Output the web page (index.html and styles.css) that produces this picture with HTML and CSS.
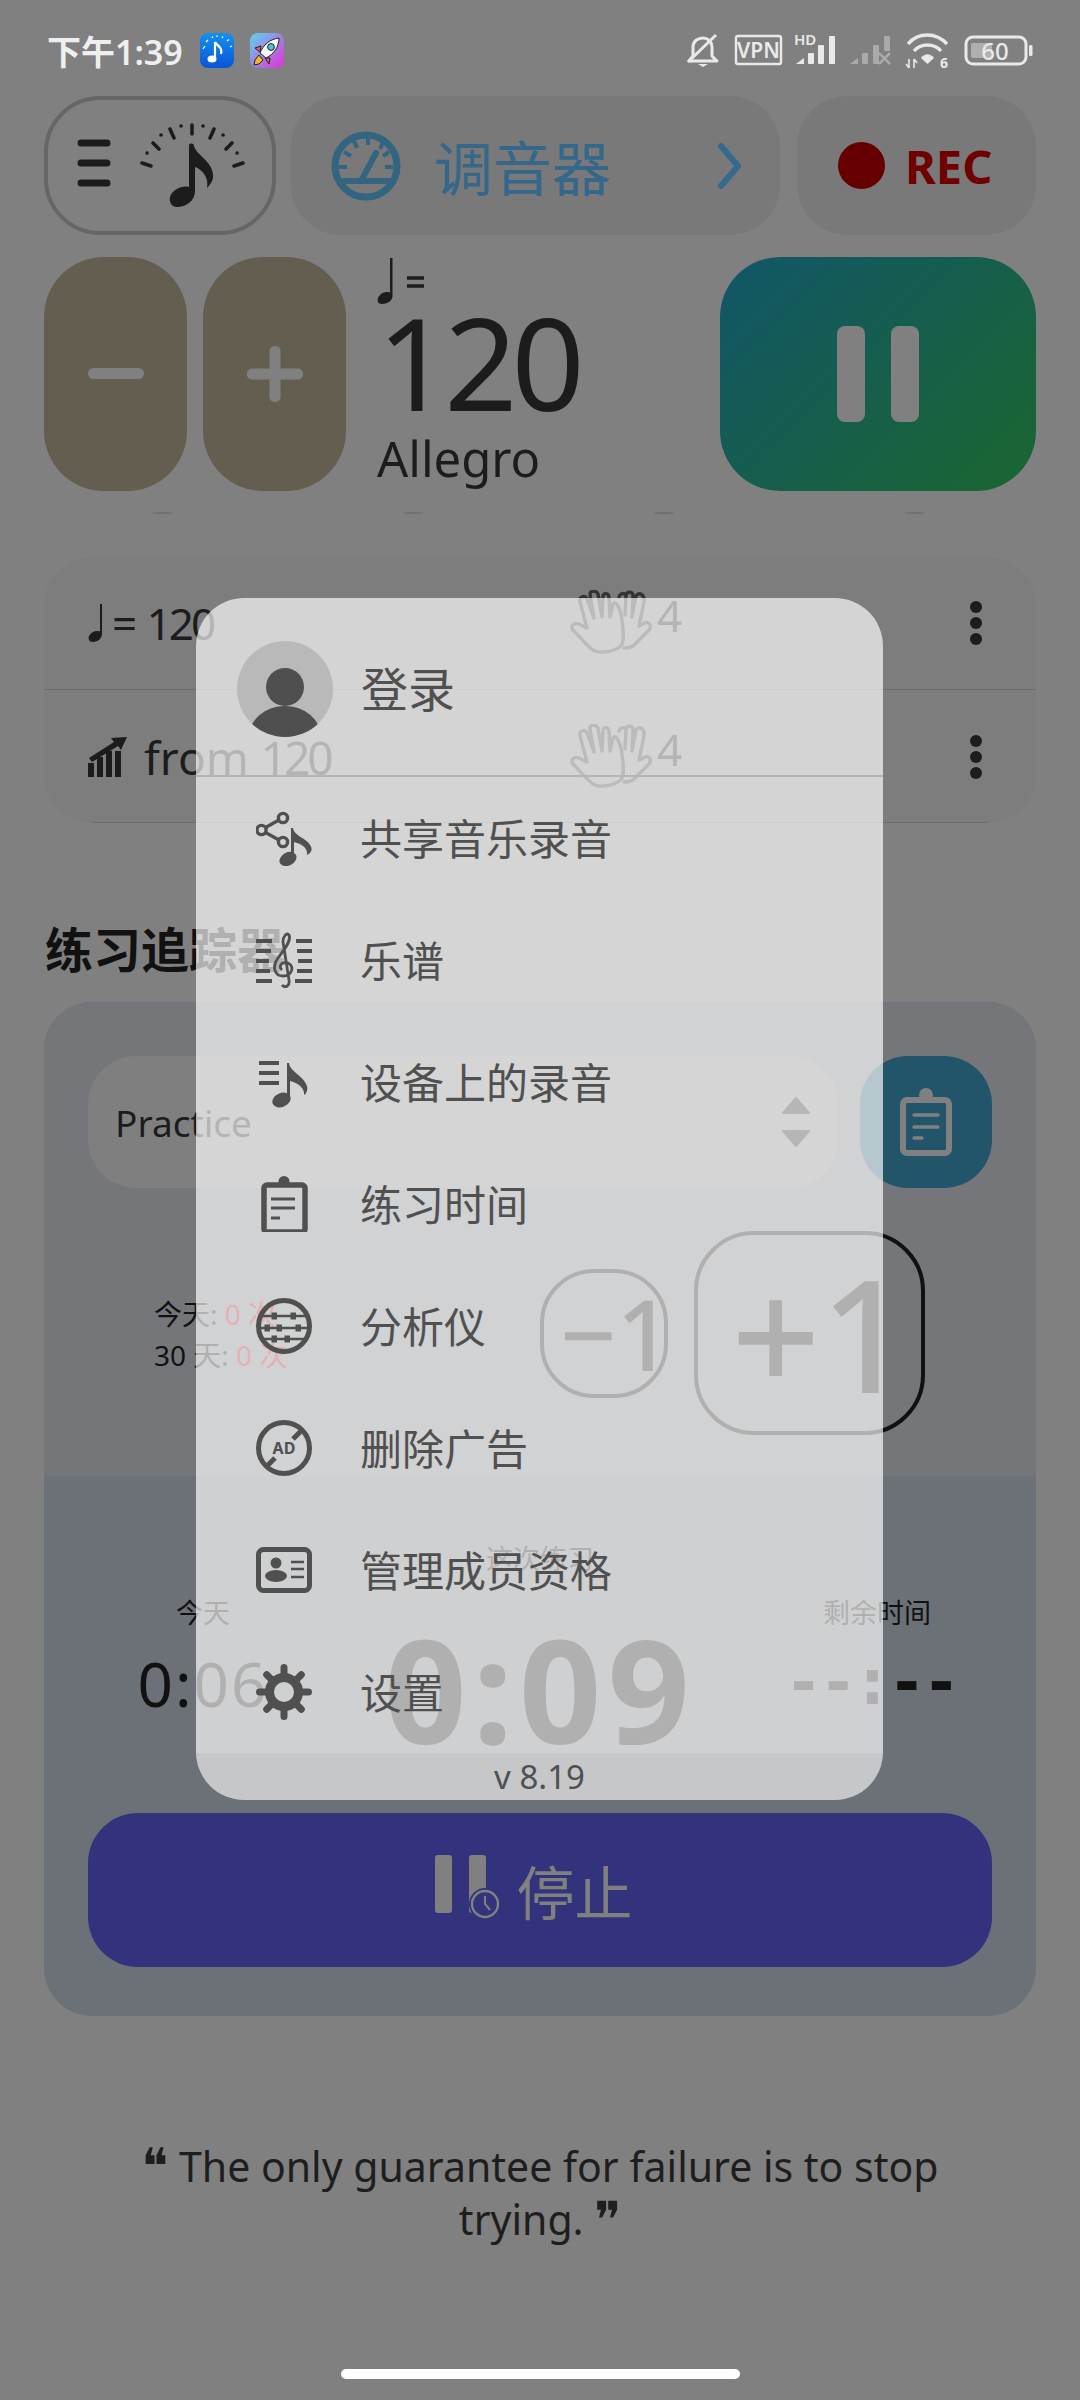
FILE: index.html
```html
<!DOCTYPE html>
<html lang="zh">
<head>
    <meta charset="UTF-8">
    <meta name="viewport" content="width=device-width, initial-scale=1.0">
    <title>Metronome</title>
    <link rel="stylesheet" href="styles.css">
</head>
<body>
    <svg class="defs">
        <defs>
            <linearGradient id="appBlue" x1="0" y1="0" x2="0" y2="1"><stop offset="0" stop-color="#1590ee"/><stop offset="1" stop-color="#0a55d8"/></linearGradient>
            <linearGradient id="appRocket" x1="0" y1="0" x2="1" y2="1"><stop offset="0" stop-color="#58d8ee"/><stop offset="1" stop-color="#e22fd8"/></linearGradient>
            <clipPath id="avatarClip"><circle cx="48" cy="48" r="48"/></clipPath>
            <g id="hands" fill="none" stroke="currentColor" stroke-width="3.4" stroke-linecap="round" stroke-linejoin="round">
                <path d="M53 58 C58 58 62 57 64 54 L78 40 C81 36 78 31 74 33 L68 36 L73 12 C74 5 68 1 65 6 L61 27 L62 6 C62 1 56 1 55 5 L54 25 M55 5 C52 2 49 4 48 7"/>
                <path d="M51 30 C52 40 54 50 50 56 C42 62 28 64 22 60 C16 56 8 46 2 40 C-1 36 3 32 8 34 L16 38 L9 12 C8 6 14 5 16 9 L23 28 L19 5 C19 0 25 0 27 4 L31 27 L32 6 C33 2 38 3 38 8 L39 27 L42 14 C44 10 49 16 51 30"/>
            </g>
            <g id="kebab" fill="#1c1c1c">
                <ellipse cx="7" cy="7" rx="6" ry="6"/><ellipse cx="7" cy="23" rx="6" ry="6"/><ellipse cx="7" cy="39" rx="6" ry="6"/>
            </g>
        </defs>
    </svg>

    <header class="status-bar">
        <span class="clock">下午1:39</span>
        <svg class="app-icon" viewBox="0 0 34 35">
            <rect width="34" height="35" rx="8" fill="url(#appBlue)"/>
            <path d="M15 9 V24 M15 9 C17 13 23 14 21 21" fill="none" stroke="#fff" stroke-width="2.2"/>
            <ellipse cx="12" cy="26" rx="4.5" ry="3.6" fill="#fff"/>
            <path d="M3 16 L5 13 M6 9 L8 7 M12 5 L13 3.5 M17 4 V2.5 M22 5 L23 3.5 M27 8 L29 6.5 M30 14 L32 13" stroke="#fff" stroke-width="1.3"/>
        </svg>
        <svg class="app-icon app-icon-second" viewBox="0 0 34 35">
            <rect width="34" height="35" rx="8" fill="url(#appRocket)"/>
            <path d="M9 22 L5 27 L4 32 L9 31 L13 27 Z" fill="#f5b52a" stroke="#222" stroke-width="1"/>
            <path d="M11 13 L5 15 L10 19 Z M20 25 L19 31 L15 25 Z" fill="#ee5660" stroke="#222" stroke-width="1"/>
            <path d="M10 20 C13 12 20 6 29 5 C29 14 24 21 16 25 Z" fill="#f6f6f6" stroke="#222" stroke-width="1"/>
            <circle cx="21" cy="14" r="3.4" fill="#4cc3d8" stroke="#222" stroke-width="1"/>
        </svg>
        <svg class="status-icons" viewBox="680 30 356 42" width="356" height="42" fill="#e9e9e9">
            <path d="M693 57 V48 C693 42 698 39 703 39 C708 39 712 43 712 48 V57 L717 62 H689 Z" fill="none" stroke="#e9e9e9" stroke-width="3" stroke-linejoin="round"/>
            <path d="M688 63 L716 36" stroke="#e9e9e9" stroke-width="3"/>
            <path d="M698 65 H708 L703 68 Z"/>
            <rect x="736" y="37" width="45" height="28" rx="2" fill="none" stroke="#e9e9e9" stroke-width="2.4"/>
            <text x="758.5" y="59" text-anchor="middle" class="st-text st-vpn">VPN</text>
            <text x="794" y="46" class="st-text st-hd">HD</text>
            <path d="M796 65 L804 59 V65 Z"/><rect x="808" y="54" width="6" height="11" rx="1"/><rect x="818" y="46" width="6" height="19" rx="1"/><rect x="829" y="37" width="6" height="28" rx="1"/>
            <g opacity=".4">
                <path d="M850 65 L858 59 V65 Z"/><rect x="862" y="54" width="6" height="11" rx="1"/><rect x="873" y="46" width="6" height="19" rx="1"/><rect x="884" y="37" width="6" height="15" rx="1"/>
                <path d="M879 54 L890 65 M890 54 L879 65" stroke="#e9e9e9" stroke-width="2.5"/>
            </g>
            <path d="M908 45 C918 33 936 33 947 45 M914 52 C921 44 934 44 941 52" fill="none" stroke="#e9e9e9" stroke-width="3.4"/>
            <path d="M921 59 C925 54 930 54 934 59 L927.5 65 Z"/>
            <path d="M909 60 V69 M906 65 L909 69 M914 69 V60 M917 64 L914 60" fill="none" stroke="#e9e9e9" stroke-width="1.6"/>
            <text x="940" y="69" class="st-text st-six">6</text>
            <rect x="966" y="38" width="60" height="27" rx="7" fill="none" stroke="#e9e9e9" stroke-width="3"/>
            <rect x="971" y="44" width="21" height="15" rx="2" opacity=".45"/>
            <text x="995" y="61" text-anchor="middle" class="st-text st-batt">60</text>
            <rect x="1029" y="46" width="3.5" height="11" rx="1.5"/>
        </svg>
    </header>

    <section class="top-row">
        <button class="menu-button">
            <svg viewBox="44 96 232 139" width="232" height="139">
                <path d="M81 143 H107 M81 163 H107 M81 183 H107" stroke="#1c1c1c" stroke-width="7" stroke-linecap="round"/>
                <g stroke="#1c1c1c" stroke-width="3.6" stroke-linecap="round">
                    <path d="M142 163 L151 166 M153 143 L159 149 M170 129 L174 138 M192 125 V134 M214 129 L210 138 M232 143 L226 149 M243 163 L234 166"/>
                    <path d="M147 153 h.1 M161 135 h.1 M181 126 h.1 M203 126 h.1 M223 135 h.1 M237 153 h.1"/>
                </g>
                <path d="M189 145 C190 143 194 143 194 146 C197 156 211 160 213 174 C214 180 210 185 207 188 C209 178 203 170 195 167 V191 C195 201 186 207 177 207 C171 207 169 201 170 197 C172 190 182 185 189 187 Z" fill="#1c1c1c"/>
            </svg>
        </button>
        <button class="tuner-button">
            <svg class="gauge" viewBox="0 0 70 70" width="70" height="70" fill="none" stroke="#336580">
                <circle cx="35" cy="35" r="31" stroke-width="7"/>
                <path d="M6 50 H64" stroke-width="6"/>
                <path d="M30 50 L45 22" stroke-width="6" stroke-linecap="round"/>
                <path d="M8 36 H16 M13 21 L20 25 M23 10 L26 17 M37 6 V14 M52 11 L49 18 M62 36 H54 M58 21 L52 25" stroke-width="4"/>
            </svg>
            <span class="tuner-label">调音器</span>
            <svg class="chevron" viewBox="0 0 26 46" width="26" height="46"><path d="M4 3 L21 23 L4 43" fill="none" stroke="#336a8e" stroke-width="6" stroke-linecap="round" stroke-linejoin="round"/></svg>
        </button>
        <button class="rec-button"><span class="rec-dot"></span><span class="rec-label">REC</span></button>
    </section>

    <section class="tempo-row">
        <button class="step-button">
            <svg viewBox="0 0 56 20" width="56" height="20"><rect x="0" y="4" width="56" height="11" rx="5.5" fill="#808080"/></svg>
        </button>
        <button class="step-button">
            <svg viewBox="0 0 56 56" width="56" height="56"><rect y="22.5" width="56" height="11" rx="5" fill="#808080"/><rect x="22.5" width="11" height="56" rx="5" fill="#808080"/></svg>
        </button>
        <div class="tempo-readout">
            <div class="tempo-note">
                <svg viewBox="0 0 50 46" width="50" height="46">
                    <path d="M13 0 H15.5 V38 C15.5 43 10 46 5 46 C1 46 0 43 1 40 C3 35 9 33 13 34.5 Z" fill="#1c1c1c"/>
                    <path d="M30 20 H47 M30 28 H47" stroke="#1c1c1c" stroke-width="3.4"/>
                </svg>
            </div>
            <div class="tempo-value">120</div>
            <div class="tempo-name">Allegro</div>
        </div>
        <button class="pause-button"><span class="pause-bar"></span><span class="pause-bar"></span></button>
    </section>

    <div class="beat-marks"><span></span><span></span><span></span><span></span></div>

    <section class="rhythm-card">
        <div class="rhythm-row">
            <div class="rhythm-tempo">
                <svg viewBox="0 0 20 38" width="20" height="38"><path d="M12 0 H14 V30 C14 35 9 38 5 38 C1 38 0 35 1 32 C3 28 8 26 12 27.5 Z" fill="#1c1c1c"/></svg>
                <span class="rhythm-eq">= <span class="narrow-digits">120</span></span>
            </div>
            <svg class="hands" viewBox="-1 0 82 66" width="82" height="66"><use href="#hands"/></svg>
            <span class="beat-count">4</span>
            <svg class="kebab" viewBox="0 0 14 46" width="14" height="46"><use href="#kebab"/></svg>
        </div>
        <div class="rhythm-row">
            <div class="rhythm-tempo rhythm-ramp">
                <svg viewBox="0 0 40 40" width="40" height="40" fill="#1c1c1c"><rect y="26" width="6" height="14"/><rect x="9" y="20" width="6" height="20"/><rect x="18" y="14" width="6" height="26"/><rect x="27" y="14" width="6" height="26"/><path d="M1 21 L26 5 L23 1 L39 0 L33 13 L30 9 L4 25 Z"/></svg>
                <span class="ramp-text">from <span class="narrow-digits">120</span></span>
            </div>
            <svg class="hands" viewBox="-1 0 82 66" width="82" height="66"><use href="#hands"/></svg>
            <span class="beat-count">4</span>
            <svg class="kebab" viewBox="0 0 14 46" width="14" height="46"><use href="#kebab"/></svg>
        </div>
    </section>

    <h2 class="section-title">练习追踪器</h2>

    <section class="practice-card">
        <div class="practice-top">
            <div class="select-row">
                <div class="practice-select">
                    <span>Practice</span>
                    <svg viewBox="0 0 28 52" width="28" height="52" fill="#222" stroke="#222" stroke-width="2" stroke-linejoin="round"><path d="M14 2 L27 17 H1 Z"/><path d="M1 35 H27 L14 50 Z"/></svg>
                </div>
                <button class="log-button">
                    <svg viewBox="0 0 52 68" width="52" height="68"><circle cx="26" cy="7" r="7" fill="#808080"/><rect x="3" y="12" width="46" height="53" rx="4" fill="none" stroke="#808080" stroke-width="6"/><path d="M14 27 H38 M14 39 H38 M14 50 H22" stroke="#808080" stroke-width="3.4" stroke-linecap="round"/></svg>
                </button>
            </div>
            <div class="counter-row">
                <div class="counter-stats">
                    <div>今天: <span class="count-red">0 次</span></div>
                    <div>30 天: <span class="count-red">0 次</span></div>
                </div>
                <button class="minus-one">−1</button>
                <button class="plus-one">+1</button>
            </div>
        </div>
        <div class="practice-bottom">
            <div class="timer-grid">
                <div class="timer timer-side">
                    <div class="timer-label">今天</div>
                    <div class="timer-value">0:06</div>
                </div>
                <div class="timer">
                    <div class="timer-label">这次练习</div>
                    <div class="timer-main">0:09</div>
                </div>
                <div class="timer timer-side">
                    <div class="timer-label">剩余时间</div>
                    <div class="timer-value timer-dash">--:--</div>
                </div>
            </div>
            <button class="stop-button">
                <svg viewBox="0 0 66 70" width="66" height="70">
                    <rect x="0" y="0" width="17" height="58" rx="3" fill="#808080"/>
                    <rect x="34" y="0" width="17" height="58" rx="3" fill="#808080"/>
                    <circle cx="50" cy="49" r="16" fill="#33337d"/>
                    <circle cx="50" cy="49" r="13" fill="none" stroke="#808080" stroke-width="2.4"/>
                    <path d="M50 41 V49 L55 55" fill="none" stroke="#808080" stroke-width="2"/>
                </svg>
                <span>停止</span>
            </button>
        </div>
    </section>

    <p class="quote"><span class="quote-mark">❝</span> The only guarantee for failure is to stop trying. <span class="quote-mark">❞</span></p>

    <div class="home-bar"></div>

    <aside class="drawer">
        <div class="drawer-head">
            <svg class="avatar" viewBox="0 0 96 96" width="96" height="96">
                <circle cx="48" cy="48" r="48" fill="#b9b9b9"/>
                <g clip-path="url(#avatarClip)" fill="#4f4f4f">
                    <circle cx="48" cy="46" r="19"/>
                    <ellipse cx="48" cy="96" rx="36" ry="31"/>
                </g>
            </svg>
            <span>登录</span>
        </div>
        <ul class="drawer-menu">
            <li>
                <svg viewBox="0 0 56 56" width="56" height="56">
                    <g fill="none" stroke="#505050" stroke-width="3.4"><circle cx="27" cy="8" r="4.6"/><circle cx="5.5" cy="20" r="4.6"/><circle cx="27" cy="32" r="4.6"/><path d="M9.5 17.5 L23 10 M9.5 22.5 L23 30"/></g>
                    <path d="M35 18 H37 C38 27 53 28 55.5 38 C56 42 53 44 51 45 C52 39 47 34 38 32 V49 L35 44 Z" fill="#505050"/>
                    <ellipse cx="32" cy="49" rx="9" ry="6.5" transform="rotate(-28 32 49)" fill="#505050"/>
                </svg>
                <span>共享音乐录音</span>
            </li>
            <li>
                <svg viewBox="0 0 56 56" width="56" height="56">
                    <path d="M0 9 H16 M0 19 H15 M0 29 H13 M0 39 H14 M0 49 H16 M40 9 H56 M41 19 H56 M42 29 H56 M41 39 H56 M39 49 H56" stroke="#505050" stroke-width="4"/>
                    <path d="M26 53 C30 57 34 53 33 48 L27 10 C27 4 31 0 33 3 C36 9 27 19 22 26 C16 34 18 44 27 44 C36 44 39 34 32 31 C26 29 22 34 26 38" fill="none" stroke="#505050" stroke-width="2.8"/>
                </svg>
                <span>乐谱</span>
            </li>
            <li>
                <svg viewBox="0 0 56 56" width="56" height="56">
                    <path d="M3 9 H23 M3 19 H23 M3 29 H23" stroke="#505050" stroke-width="3.8"/>
                    <path d="M31 9 H33 C34 18 47 21 51 32 C52 37 50 40 48 41 C49 35 43 29 34 27 V45 L31 42 Z" fill="#505050"/>
                    <ellipse cx="25.5" cy="46" rx="9.5" ry="7" transform="rotate(-25 25.5 46)" fill="#505050"/>
                </svg>
                <span>设备上的录音</span>
            </li>
            <li>
                <svg viewBox="0 0 56 56" width="56" height="56">
                    <circle cx="28" cy="5.5" r="5.5" fill="#505050"/>
                    <rect x="8" y="9" width="41" height="47" rx="3" fill="none" stroke="#505050" stroke-width="5.5"/>
                    <path d="M15 23 H39 M15 32 H39 M15 42 H24" stroke="#505050" stroke-width="3"/>
                </svg>
                <span>练习时间</span>
            </li>
            <li>
                <svg viewBox="0 0 56 56" width="56" height="56">
                    <circle cx="28" cy="28" r="25.5" fill="none" stroke="#505050" stroke-width="5"/>
                    <path d="M6 18 H50 M2 30 H54 M6 41 H50" stroke="#505050" stroke-width="2.4"/>
                    <g fill="#505050"><rect x="15.5" y="14.5" width="5.5" height="7"/><rect x="34.5" y="14.5" width="5.5" height="7"/><rect x="8.5" y="26.5" width="5.5" height="7"/><rect x="20.5" y="26.5" width="5.5" height="7"/><rect x="39.5" y="26.5" width="5.5" height="7"/><rect x="15.5" y="37.5" width="5.5" height="7"/><rect x="28.5" y="37.5" width="5.5" height="7"/></g>
                </svg>
                <span>分析仪</span>
            </li>
            <li>
                <svg viewBox="0 0 56 56" width="56" height="56">
                    <circle cx="28" cy="28" r="25.5" fill="none" stroke="#505050" stroke-width="5"/>
                    <path d="M46 10 L37 19 M19 38 L10 47" stroke="#505050" stroke-width="5"/>
                    <text x="28" y="34" text-anchor="middle" class="ad-text">AD</text>
                </svg>
                <span>删除广告</span>
            </li>
            <li>
                <svg viewBox="0 0 56 46" width="56" height="46">
                    <rect x="2.5" y="2.5" width="51" height="41" rx="5" fill="none" stroke="#505050" stroke-width="5"/>
                    <circle cx="20" cy="16" r="5.5" fill="#505050"/>
                    <ellipse cx="20" cy="29" rx="11" ry="6" fill="#505050"/>
                    <path d="M35 15 H48 M35 22 H48 M35 30 H48" stroke="#505050" stroke-width="2.6"/>
                </svg>
                <span>管理成员资格</span>
            </li>
            <li>
                <svg viewBox="0 0 56 56" width="56" height="56">
                    <g stroke="#505050" stroke-width="7" stroke-linecap="round">
                        <path d="M28 3.5 V12 M28 44 V52.5 M3.5 28 H12 M44 28 H52.5 M10.7 10.7 L17 17 M39 39 L45.3 45.3 M45.3 10.7 L39 17 M17 39 L10.7 45.3"/>
                    </g>
                    <circle cx="28" cy="28" r="14.5" fill="none" stroke="#505050" stroke-width="9"/>
                </svg>
                <span>设置</span>
            </li>
        </ul>
        <div class="drawer-foot">v 8.19</div>
    </aside>
</body>
</html>
```
FILE: styles.css
```css
* {
    box-sizing: border-box;
}
html, body {
    margin: 0;
}
body {
    position: relative;
    width: 1080px;
    height: 2400px;
    overflow: hidden;
    background-color: #808080;
    color: #1c1c1c;
    font-family: "Noto Sans", "Noto Sans CJK SC", sans-serif;
}
button {
    border: none;
    padding: 0;
    font-family: inherit;
    background: none;
}
.defs {
    position: absolute;
    width: 0;
    height: 0;
}

/* status bar */
.status-bar {
    display: flex;
    align-items: center;
    height: 96px;
    padding: 4px 0 0 47px;
}
.clock {
    color: #efefef;
    font-size: 34px;
    font-weight: 600;
    width: 153px;
    white-space: nowrap;
}
.app-icon {
    width: 34px;
    height: 35px;
}
.app-icon-second {
    margin-left: 16px;
}
.status-icons {
    margin-left: auto;
    margin-right: 44px;
}
.st-text {
    fill: #e9e9e9;
    font-family: "Noto Sans", sans-serif;
    font-weight: 600;
}
.st-vpn { font-size: 21px; }
.st-hd { font-size: 15px; }
.st-six { font-size: 14px; font-weight: 700; }
.st-batt { font-size: 24px; font-weight: 500; }

/* top buttons */
.top-row {
    display: flex;
    gap: 15px;
    height: 139px;
    margin: 0 44px;
}
.menu-button {
    width: 232px;
    border: 4px solid #666;
    border-radius: 56px;
    overflow: hidden;
}
.menu-button svg {
    display: block;
    margin: -4px;
}
.tuner-button {
    display: flex;
    align-items: center;
    width: 489px;
    padding-left: 40px;
    border-radius: 50px;
    background-color: #797979;
}
.tuner-label {
    margin-left: 33px;
    color: #34678a;
    font-size: 59px;
    white-space: nowrap;
}
.chevron {
    margin-left: 106px;
}
.rec-button {
    display: flex;
    align-items: center;
    width: 239px;
    margin-left: 2px;
    padding-left: 41px;
    border-radius: 50px;
    background-color: #797979;
}
.rec-dot {
    width: 47px;
    height: 47px;
    border-radius: 50%;
    background-color: #660000;
}
.rec-label {
    margin-left: 20px;
    color: #6e0000;
    font-size: 47px;
    font-weight: 700;
}

/* tempo */
.tempo-row {
    display: flex;
    height: 234px;
    margin: 22px 44px 0;
}
.step-button {
    display: flex;
    align-items: center;
    justify-content: center;
    width: 143px;
    margin-right: 16px;
    border-radius: 60px;
    background-color: #635e50;
}
.tempo-readout {
    margin-left: 15px;
}
.tempo-note {
    height: 46px;
    margin-top: 1px;
}
.tempo-note svg {
    display: block;
}
.tempo-value {
    height: 132px;
    margin-top: -8px;
    font-size: 128px;
    line-height: 132px;
    letter-spacing: -6px;
}
.tempo-name {
    margin-top: 2px;
    font-size: 49px;
    line-height: 56px;
}
.pause-button {
    display: flex;
    gap: 26px;
    align-items: center;
    justify-content: center;
    width: 316px;
    margin-left: auto;
    border-radius: 60px;
    background: linear-gradient(135deg, #115668, #1b6630);
}
.pause-bar {
    width: 28px;
    height: 96px;
    border-radius: 8px;
    background-color: #808080;
}
.beat-marks {
    display: flex;
    gap: 231px;
    height: 2px;
    margin: 21px 0 0 152px;
}
.beat-marks span {
    width: 20px;
    border-radius: 50%;
    background-color: #707070;
}

/* rhythm card */
.rhythm-card {
    height: 266px;
    margin: 43px 44px 0;
    border-radius: 48px;
    background-color: #7d7d7d;
    position: relative;
}
.rhythm-card::after {
    content: "";
    position: absolute;
    left: 48px;
    right: 48px;
    bottom: 0;
    height: 1px;
    background-color: #6c6c6c;
}
.rhythm-row {
    display: flex;
    align-items: center;
    height: 133px;
    padding: 0 53px 0 44px;
    font-size: 44px;
}
.rhythm-row:first-child {
    border-bottom: 1px solid #6c6c6c;
}
.rhythm-tempo {
    display: flex;
    align-items: center;
    gap: 4px;
    width: 482px;
}
.rhythm-ramp {
    gap: 16px;
}
.rhythm-eq {
    font-size: 44px;
    word-spacing: -2px;
}
.ramp-text {
    font-size: 46px;
}
.narrow-digits {
    letter-spacing: -3px;
}
.hands {
    color: #333;
}
.beat-count {
    margin-left: 5px;
    margin-top: -16px;
}
.kebab {
    margin-left: auto;
}
.section-title {
    margin: 97px 0 0 45px;
    color: #111;
    font-size: 48px;
    font-weight: 700;
    line-height: 60px;
}

/* practice tracker */
.practice-card {
    margin: 22px 44px 0;
    height: 1014px;
    border-radius: 48px;
    overflow: hidden;
    background-color: #6c7077;
}
.practice-top {
    height: 474px;
    padding-top: 54px;
    background-color: #75767a;
}
.select-row {
    display: flex;
    gap: 22px;
    height: 132px;
    margin: 0 44px;
}
.practice-select {
    display: flex;
    align-items: center;
    justify-content: space-between;
    width: 750px;
    padding: 0 28px 0 27px;
    border-radius: 48px;
    background-color: #7f7f7f;
    font-size: 37px;
}
.log-button {
    width: 132px;
    border-radius: 48px;
    background-color: #225569;
}
.log-button svg {
    display: block;
    margin: 0 auto;
}
.counter-row {
    display: flex;
    align-items: center;
    gap: 26px;
    height: 204px;
    margin-top: 43px;
    padding: 0 111px 0 110px;
}
.counter-stats {
    margin-right: auto;
    padding-top: 3px;
    color: #111;
    font-size: 28px;
    line-height: 41px;
}
.count-red {
    color: #b3111a;
}
.minus-one {
    width: 128px;
    height: 129px;
    padding-left: 16px;
    border: 4px solid #111;
    border-radius: 54px;
    color: #111;
    font-size: 98px;
    font-weight: 500;
    line-height: 110px;
    white-space: nowrap;
}
.plus-one {
    width: 231px;
    height: 204px;
    padding-left: 22px;
    border: 4px solid #111;
    border-radius: 60px;
    color: #111;
    font-size: 156px;
    font-weight: 500;
    line-height: 180px;
    white-space: nowrap;
}
.practice-bottom {
    padding-top: 63px;
}
.timer-grid {
    display: grid;
    grid-template-columns: 318px 356px 318px;
    height: 216px;
    color: #111;
    text-align: center;
}
.timer-side {
    padding-top: 54px;
}
.timer-label {
    font-size: 27px;
    line-height: 40px;
}
.timer-value {
    margin-top: 15px;
    font-size: 62px;
    line-height: 70px;
    letter-spacing: 2px;
}
.timer-dash {
    font-family: "DejaVu Sans", sans-serif;
    font-weight: 700;
    letter-spacing: 9px;
}
.timer-main {
    margin-top: 44px;
    font-size: 144px;
    font-weight: 700;
    line-height: 130px;
    letter-spacing: 6px;
    white-space: nowrap;
}
.stop-button {
    display: flex;
    align-items: center;
    justify-content: center;
    gap: 15px;
    width: 904px;
    height: 154px;
    margin: 58px 44px 0;
    padding-right: 12px;
    border-radius: 50px;
    background-color: #33337d;
    color: #808080;
    font-size: 58px;
}

/* quote */
.quote {
    width: 880px;
    margin: 124px auto 0;
    color: #1e1e1e;
    font-size: 41px;
    line-height: 53px;
    text-align: center;
}
.quote-mark {
    font-family: "DejaVu Sans", sans-serif;
    font-size: 50px;
    line-height: 0;
    vertical-align: -2px;
}
.home-bar {
    width: 399px;
    height: 10px;
    margin: 123px auto 0;
    border-radius: 5px;
    background-color: #fff;
}

/* side drawer, sits over the page */
.drawer {
    position: absolute;
    left: 196px;
    top: 598px;
    display: flex;
    flex-direction: column;
    width: 687px;
    height: 1202px;
    border-radius: 48px;
    overflow: hidden;
    background-color: rgba(255, 255, 255, 0.67);
    color: #505050;
}
.drawer-head {
    display: flex;
    flex-shrink: 0;
    align-items: center;
    gap: 28px;
    height: 179px;
    padding: 4px 0 0 41px;
    border-bottom: 2px solid #b5b5b5;
    font-size: 47px;
}
.drawer-head span {
    padding-bottom: 4px;
}
.drawer-menu {
    flex-shrink: 0;
    margin: 0;
    padding: 0;
    list-style: none;
}
.drawer-menu li {
    display: flex;
    align-items: center;
    height: 122px;
    padding-left: 60px;
    font-size: 42px;
}
.drawer-menu span {
    margin-left: 48px;
    padding-bottom: 3px;
}
.ad-text {
    fill: #505050;
    font-family: "Noto Sans", sans-serif;
    font-size: 16px;
    font-weight: 700;
}
.drawer-foot {
    flex: 1;
    min-height: 0;
    background-color: rgba(0, 0, 0, 0.04);
    font-size: 33px;
    line-height: 47px;
    text-align: center;
}
```
